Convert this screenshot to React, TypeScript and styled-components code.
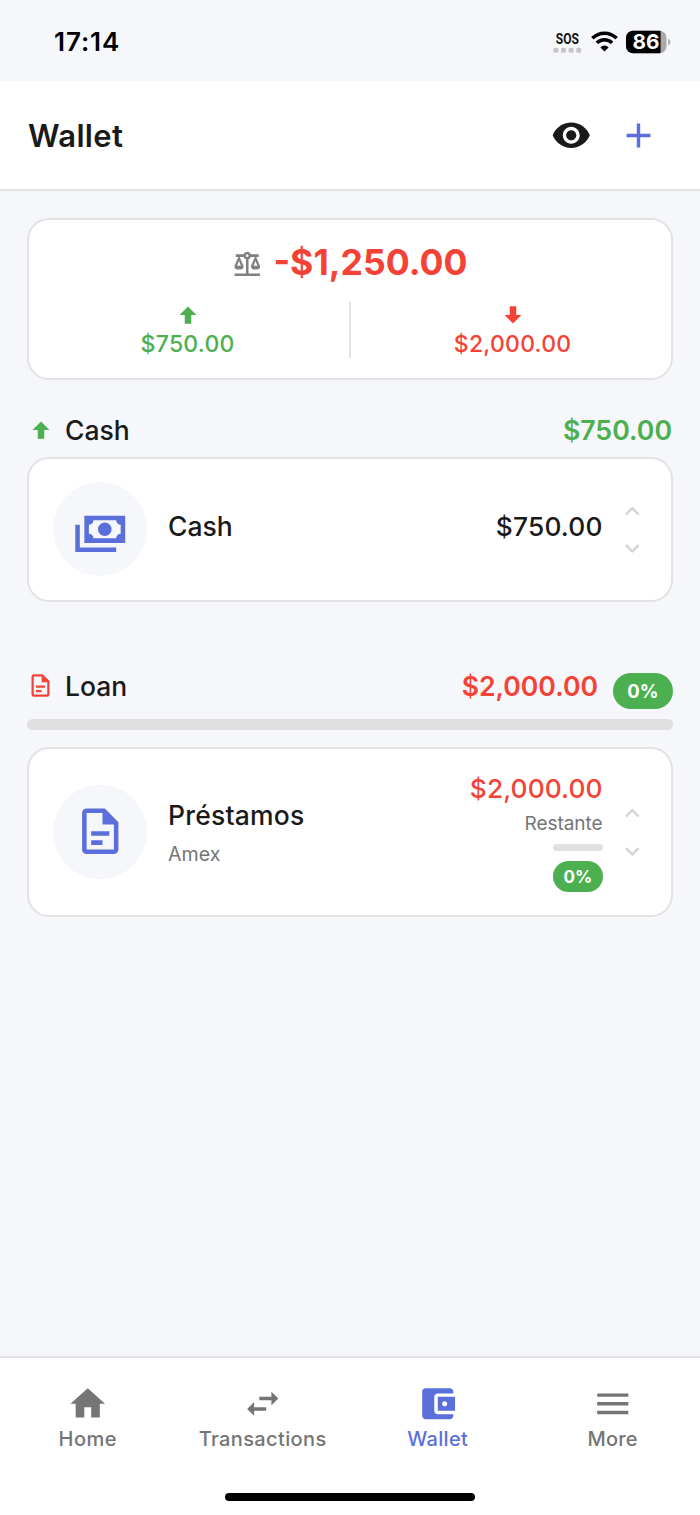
import React from "react";
import styled, { createGlobalStyle } from "styled-components";

const c = {
  bg: "#f5f7fb",
  card: "#ffffff",
  line: "#e2e2e3",
  track: "#e0e0e0",
  ink: "#1a1a1a",
  muted: "#757575",
  primary: "#5b6fdb",
  green: "#4caf50",
  red: "#f44336",
};

const Global = createGlobalStyle`
  * { box-sizing: border-box; }
  html, body { margin: 0; padding: 0; background: ${c.bg}; }
  body { font-family: Inter, "Liberation Sans", sans-serif; color: ${c.ink}; }
`;

const paths = {
  eye: "M12 4.5C7 4.5 2.73 7.61 1 12c1.73 4.39 6 7.5 11 7.5s9.27-3.11 11-7.5c-1.73-4.39-6-7.5-11-7.5zM12 17c-2.76 0-5-2.24-5-5s2.24-5 5-5 5 2.24 5 5-2.24 5-5 5zm0-8c-1.66 0-3 1.34-3 3s1.34 3 3 3 3-1.34 3-3-1.34-3-3-3z",
  plus: "M19 13h-6v6h-2v-6H5v-2h6V5h2v6h6v2z",
  scale:
    "M12 3c-1.27 0-2.4.8-2.82 2H3v2h1.95L2 14c-.47 2 1 3 3.5 3s4.06-1 3.5-3L6.05 7h3.12c.33.85.98 1.5 1.83 1.83V20H2v2h20v-2h-9V8.82c.85-.32 1.5-.97 1.82-1.82h3.13L15 14c-.47 2 1 3 3.5 3s4.06-1 3.5-3l-2.95-7H21V5h-6.17C14.4 3.8 13.27 3 12 3m0 2a1 1 0 0 1 1 1 1 1 0 0 1-1 1 1 1 0 0 1-1-1 1 1 0 0 1 1-1m-6.5 5.25L7 14H4l1.5-3.75m13 0L20 14h-3l1.5-3.75z",
  up: "M15 20H9v-8H4.16L12 4.16 19.84 12H15v8z",
  down: "M9 4h6v8h4.84L12 19.84 4.16 12H9V4z",
  cash: "M5 6h18v12H5V6m9 3a3 3 0 0 1 3 3 3 3 0 0 1-3 3 3 3 0 0 1-3-3 3 3 0 0 1 3-3M9 8a2 2 0 0 1-2 2v4a2 2 0 0 1 2 2h10a2 2 0 0 1 2-2v-4a2 2 0 0 1-2-2H9m-8 2h2v10h16v2H1V10z",
  doc: "M6 2a2 2 0 0 0-2 2v16a2 2 0 0 0 2 2h12a2 2 0 0 0 2-2V8l-6-6H6m0 2h7v5h5v11H6V4m2 8v2h8v-2H8m0 4v2h5v-2H8z",
  chevronUp: "M7.41 15.41L12 10.83l4.59 4.58L18 14l-6-6-6 6 1.41 1.41z",
  chevronDown: "M7.41 8.59L12 13.17l4.59-4.58L18 10l-6 6-6-6 1.41-1.41z",
  home: "M10 20v-6h4v6h5v-8h3L12 3 2 12h3v8h5z",
  swap: "M6.99 11L3 15l3.99 4v-3H14v-2H6.99v-3zM21 9l-3.99-4v3H10v2h7.01v3L21 9z",
  wallet:
    "M21 18v1c0 1.1-.9 2-2 2H5c-1.11 0-2-.9-2-2V5c0-1.1.89-2 2-2h14c1.1 0 2 .9 2 2v1h-9c-1.11 0-2 .9-2 2v8c0 1.1.89 2 2 2h9zm-9-2h10V8H12v8zm4-2.5c-.83 0-1.5-.67-1.5-1.5s.67-1.5 1.5-1.5 1.5.67 1.5 1.5-.67 1.5-1.5 1.5z",
  menu: "M3 18h18v-2H3v2zm0-5h18v-2H3v2zm0-7v2h18V6H3z",
};

const Svg = styled.svg`
  display: block;
  flex: none;
  overflow: visible;
`;

function Icon({ name, size, color }: { name: keyof typeof paths; size: number; color: string }) {
  return (
    <Svg width={size} height={size} viewBox="0 0 24 24" fill={color} fillRule="evenodd">
      <path d={paths[name]} />
    </Svg>
  );
}

const Screen = styled.div`
  width: 700px;
  height: 1515px;
  display: flex;
  flex-direction: column;
  background: ${c.bg};
  overflow: hidden;
`;

const Text = styled.span<{ $size: number; $weight?: number; $color?: string; $track?: number; $lh?: number }>`
  display: block;
  white-space: nowrap;
  font-size: ${(p) => p.$size}px;
  font-weight: ${(p) => p.$weight ?? 500};
  color: ${(p) => p.$color ?? c.ink};
  letter-spacing: ${(p) => p.$track ?? 0}px;
  line-height: ${(p) => p.$lh ?? 32}px;
  margin-right: ${(p) => -(p.$track ?? 0)}px;
`;

const StatusBar = styled.div`
  height: 81px;
  flex: none;
  display: flex;
  justify-content: space-between;
  padding: 26px 29px 0 54px;
`;

const StatusIcons = styled.div`
  display: flex;
  gap: 8px;
`;

const Header = styled.header`
  height: 110px;
  flex: none;
  display: flex;
  align-items: center;
  justify-content: space-between;
  padding: 0 41.2px 0 28px;
  background: ${c.card};
  border-bottom: 2px solid ${c.line};
`;

const Title = styled.h1`
  margin: 0;
  padding-top: 1px;
`;

const HeaderActions = styled.div`
  display: flex;
  align-items: center;
  gap: 26.5px;
`;

const Main = styled.main`
  flex: 1;
  padding: 27px 27px 0;
`;

const Card = styled.section`
  background: ${c.card};
  border: 2px solid ${c.line};
  border-radius: 22px;
`;

const Summary = styled(Card)`
  height: 162px;
  padding-top: 23px;
`;

const Balance = styled.div`
  display: flex;
  justify-content: center;
  align-items: center;
  gap: 10.5px;
  height: 40px;
`;

const Split = styled.div`
  display: grid;
  grid-template-columns: 1fr 2px 1fr;
  grid-template-rows: 56px;
  column-gap: 3px;
  margin-top: 19px;
`;

const SplitCell = styled.div`
  display: flex;
  flex-direction: column;
  align-items: center;
  gap: 1px;
`;

const Divider = styled.div`
  background: ${c.line};
`;

const GroupHead = styled.div<{ $top: number }>`
  display: flex;
  align-items: center;
  height: 36px;
  margin-top: ${(p) => p.$top}px;
  padding-right: 1px;
`;

const GroupIcon = styled.div<{ $lift?: number }>`
  display: flex;
  justify-content: center;
  width: 27.5px;
  margin-right: 10.5px;
  padding-bottom: ${(p) => p.$lift ?? 0}px;
`;

const Spacer = styled.div`
  flex: 1;
`;

const Pill = styled.div<{ $w: number; $h: number }>`
  display: flex;
  align-items: center;
  justify-content: center;
  flex: none;
  width: ${(p) => p.$w}px;
  height: ${(p) => p.$h}px;
  border-radius: ${(p) => p.$h / 2}px;
  background: ${c.green};
`;

const GroupPill = styled(Pill)`
  margin: 9px -1px 0 15px;
`;

const Track = styled.div<{ $w?: number; $h: number; $top: number }>`
  width: ${(p) => (p.$w ? p.$w + "px" : "100%")};
  height: ${(p) => p.$h}px;
  margin-top: ${(p) => p.$top}px;
  border-radius: ${(p) => p.$h / 2}px;
  background: ${c.track};
`;

const AccountCard = styled(Card)<{ $h: number; $top: number }>`
  display: flex;
  align-items: center;
  height: ${(p) => p.$h}px;
  margin-top: ${(p) => p.$top}px;
  padding: 0 25px 0 24px;
`;

const Avatar = styled.div`
  display: flex;
  align-items: center;
  justify-content: center;
  width: 94px;
  height: 94px;
  margin-bottom: 1px;
  border-radius: 50%;
  background: ${c.bg};
  flex: none;
`;

const Names = styled.div<{ $up?: number; $down?: number }>`
  flex: 1;
  padding: ${(p) => p.$down ?? 0}px 0 ${(p) => p.$up ?? 0}px 21px;
`;

const Amounts = styled.div<{ $up?: number }>`
  display: flex;
  flex-direction: column;
  align-items: flex-end;
  padding-bottom: ${(p) => p.$up ?? 0}px;
`;

const AmountPill = styled(Pill)`
  margin-top: 10px;
  padding-top: 2px;
`;

const Reorder = styled.div`
  display: flex;
  flex-direction: column;
  gap: 9px;
  margin-left: 15px;
`;

const TabBar = styled.nav`
  height: 159px;
  flex: none;
  display: flex;
  flex-direction: column;
  align-items: center;
  justify-content: space-between;
  background: ${c.card};
  border-top: 2px solid ${c.line};
  padding-bottom: 14px;
`;

const Tabs = styled.div`
  display: grid;
  grid-template-columns: repeat(4, 175px);
  padding-top: 24.5px;
`;

const Tab = styled.div`
  display: flex;
  flex-direction: column;
  align-items: center;
`;

const HomeIndicator = styled.div`
  width: 250px;
  height: 8px;
  border-radius: 4px;
  background: #000;
`;

const Signal = () => (
  <Svg width="30" height="32" viewBox="0 -4 30 32">
    <text
      x="2.8"
      y="14.2"
      fontFamily="Roboto, sans-serif"
      fontSize="15"
      fontWeight="700"
      fill="#111"
      textLength="23.2"
      lengthAdjust="spacingAndGlyphs"
    >
      SOS
    </text>
    {[0.4, 8, 15.6, 23.2].map((x) => (
      <rect key={x} x={x} y="17.8" width="5" height="5" rx="1.5" fill="#c6c6ca" />
    ))}
  </Svg>
);

const Wifi = () => (
  <Svg width="27" height="32" viewBox="0 -4 27 32" fill="none" stroke="#000" strokeWidth="3.5">
    <path d="M1.4 8.2A17 17 0 0 1 25.6 8.2" />
    <path d="M5.9 12.9A10.6 10.6 0 0 1 21.1 12.9" />
    <path d="M13.5 21.6L9.4 17.5A5.4 5.4 0 0 1 17.6 17.5Z" fill="#000" stroke="none" />
  </Svg>
);

const Battery = () => (
  <Svg width="45" height="32" viewBox="0 -4 45 32">
    <defs>
      <clipPath id="cell">
        <rect x="0" y="0.7" width="40.5" height="22.6" rx="7" />
      </clipPath>
    </defs>
    <g clipPath="url(#cell)">
      <rect width="41" height="24" fill="#a9a9ac" />
      <rect width="34.6" height="24" fill="#000" />
    </g>
    <path d="M42 8.5Q44.6 9.5 44.6 12T42 15.5Z" fill="#b4b4b8" />
    <text x="6.4" y="19.4" fontSize="20.5" fontWeight="700" fill="#fff" textLength="27" lengthAdjust="spacingAndGlyphs">
      86
    </text>
  </Svg>
);

const tabs: { icon: keyof typeof paths; label: string; active?: boolean; track: number }[] = [
  { icon: "home", label: "Home", track: 0.5 },
  { icon: "swap", label: "Transactions", track: 0.38 },
  { icon: "wallet", label: "Wallet", active: true, track: 0.35 },
  { icon: "menu", label: "More", track: 0.2 },
];

const Arrows = () => (
  <Reorder>
    <Icon name="chevronUp" size={28.5} color="#d3d3d3" />
    <Icon name="chevronDown" size={28.5} color="#d3d3d3" />
  </Reorder>
);

export default function App() {
  return (
    <Screen>
      <Global />
      <StatusBar>
        <Text $size={26} $weight={600} $color="#000" $track={0.9}>17:14</Text>
        <StatusIcons>
          <Signal />
          <Wifi />
          <Battery />
        </StatusIcons>
      </StatusBar>

      <Header>
        <Title>
          <Text $size={31} $weight={600} $track={0.35}>Wallet</Text>
        </Title>
        <HeaderActions>
          <Icon name="eye" size={40.5} color={c.ink} />
          <Icon name="plus" size={41} color={c.primary} />
        </HeaderActions>
      </Header>

      <Main>
        <Summary>
          <Balance>
            <Icon name="scale" size={30.5} color="#808080" />
            <Text $size={35.6} $weight={700} $color={c.red} $lh={42}>-$1,250.00</Text>
          </Balance>
          <Split>
            <SplitCell>
              <Icon name="up" size={26} color={c.green} />
              <Text $size={23} $color={c.green} $lh={30} $track={0.25}>$750.00</Text>
            </SplitCell>
            <Divider />
            <SplitCell>
              <Icon name="down" size={26} color={c.red} />
              <Text $size={23} $color={c.red} $lh={30} $track={0.25}>$2,000.00</Text>
            </SplitCell>
          </Split>
        </Summary>

        <GroupHead $top={32}>
          <GroupIcon>
            <Icon name="up" size={26} color={c.green} />
          </GroupIcon>
          <Text $size={26.5}>Cash</Text>
          <Spacer />
          <Text $size={26.7} $weight={600} $color={c.green}>$750.00</Text>
        </GroupHead>
        <AccountCard $h={145} $top={9}>
          <Avatar>
            <Icon name="cash" size={54.5} color={c.primary} />
          </Avatar>
          <Names $up={7}>
            <Text $size={26.5}>Cash</Text>
          </Names>
          <Amounts $up={6}>
            <Text $size={26.3} $track={0.2}>$750.00</Text>
          </Amounts>
          <Arrows />
        </AccountCard>

        <GroupHead $top={66}>
          <GroupIcon $lift={1}>
            <Icon name="doc" size={27} color={c.red} />
          </GroupIcon>
          <Text $size={26.5}>Loan</Text>
          <Spacer />
          <Text $size={26.6} $weight={600} $color={c.red}>$2,000.00</Text>
          <GroupPill $w={60} $h={36}>
            <Text $size={18.5} $weight={700} $color="#fff">0%</Text>
          </GroupPill>
        </GroupHead>
        <Track $h={11} $top={15} />
        <AccountCard $h={170} $top={17}>
          <Avatar>
            <Icon name="doc" size={54.5} color={c.primary} />
          </Avatar>
          <Names $down={12}>
            <Text $size={26.5} $track={0.2}>Préstamos</Text>
            <Text $size={19.6} $weight={400} $color={c.muted} $lh={46}>Amex</Text>
          </Names>
          <Amounts>
            <Text $size={26.3} $track={0.1} $color={c.red}>$2,000.00</Text>
            <Text $size={19} $weight={400} $color={c.muted} $lh={38} $track={-0.05}>Restante</Text>
            <Track $w={49.4} $h={7} $top={1} />
            <AmountPill $w={49.4} $h={31}>
              <Text $size={17} $weight={700} $color="#fff">0%</Text>
            </AmountPill>
          </Amounts>
          <Arrows />
        </AccountCard>
      </Main>

      <TabBar>
        <Tabs>
          {tabs.map((t) => (
            <Tab key={t.label}>
              <Icon name={t.icon} size={41.5} color={t.active ? c.primary : c.muted} />
              <Text $size={20} $color={t.active ? c.primary : c.muted} $track={t.track} $lh={30}>{t.label}</Text>
            </Tab>
          ))}
        </Tabs>
        <HomeIndicator />
      </TabBar>
    </Screen>
  );
}
